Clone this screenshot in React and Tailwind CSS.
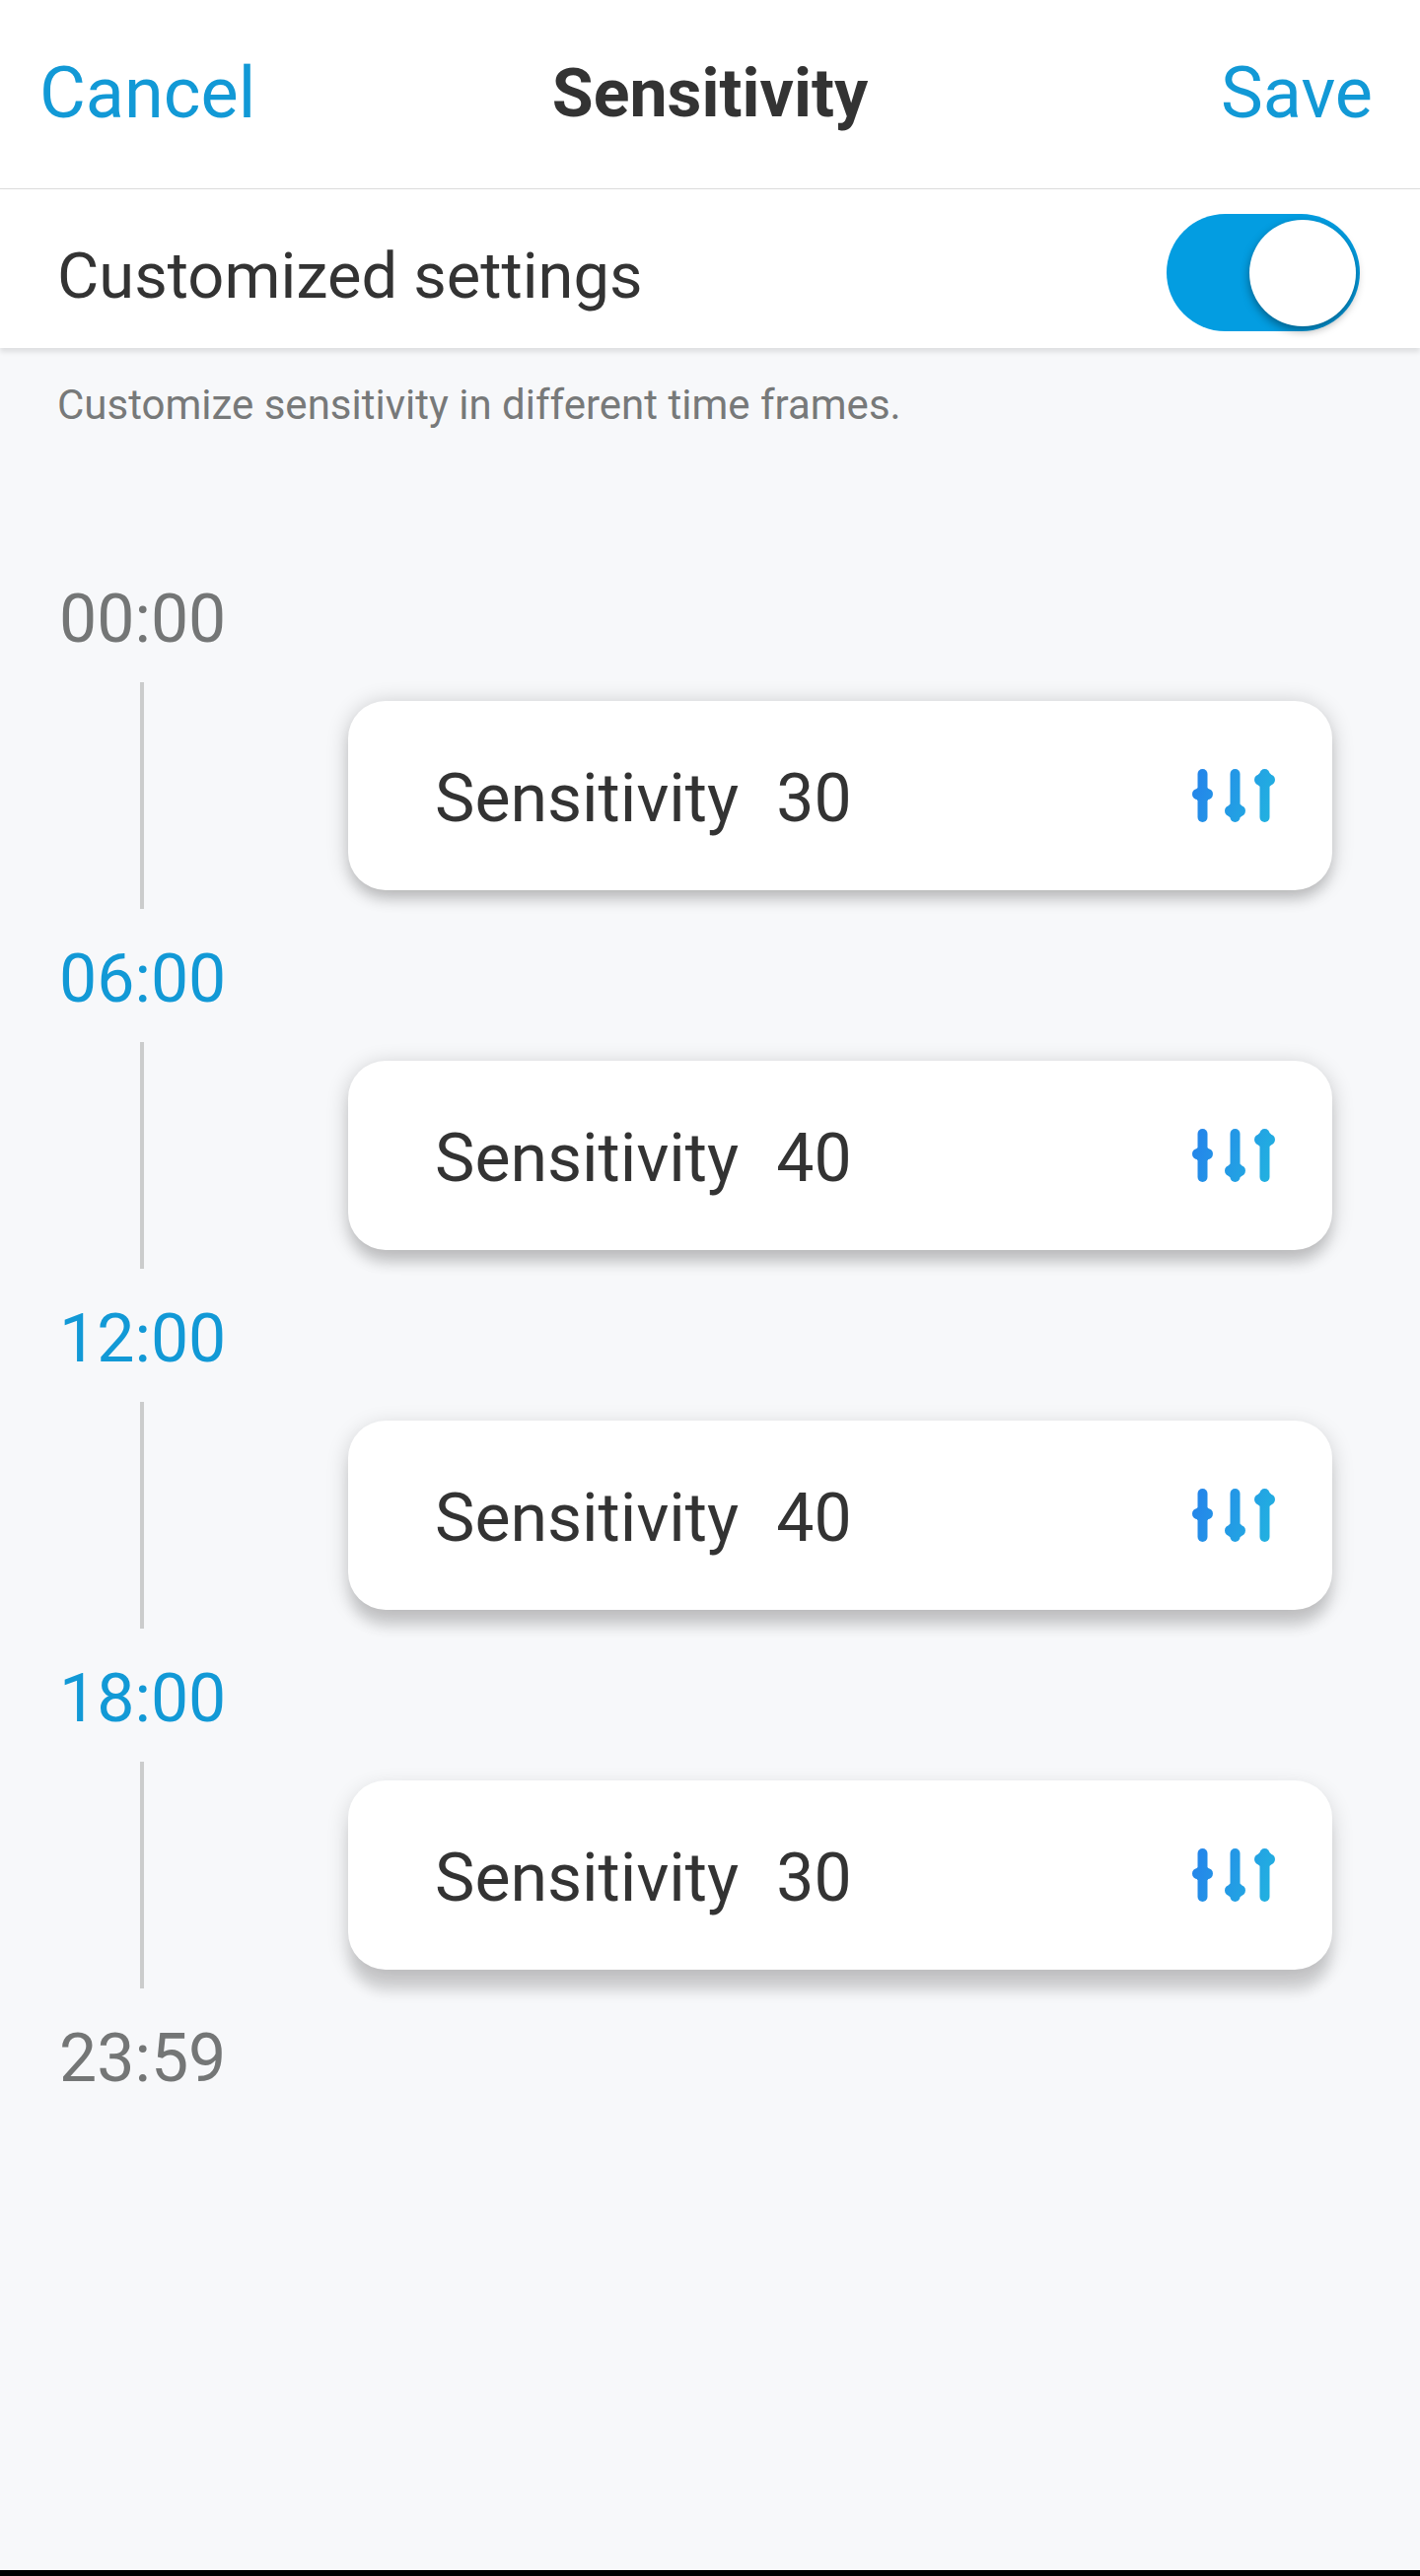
import React, { useState } from "react";

const frames = [
  {
    start: "00:00",
    value: 30,
    shadow: "shadow-[0_2px_22px_rgba(0,0,0,0.2),0_12px_14px_-3px_rgba(0,0,0,0.15)]",
  },
  {
    start: "06:00",
    value: 40,
    shadow: "shadow-[0_4px_22px_rgba(0,0,0,0.2),0_16px_14px_-3px_rgba(0,0,0,0.13)]",
  },
  {
    start: "12:00",
    value: 40,
    shadow: "shadow-[0_6px_22px_rgba(0,0,0,0.18),0_20px_14px_-3px_rgba(0,0,0,0.12)]",
  },
  {
    start: "18:00",
    value: 30,
    shadow: "shadow-[0_8px_22px_rgba(0,0,0,0.16),0_25px_14px_-3px_rgba(0,0,0,0.12)]",
  },
];

const SlidersIcon = () => (
  <svg className="w-[84px] h-[54px]" viewBox="0 0 84 54" fill="none" aria-hidden="true">
    <defs>
      <linearGradient id="sliders" gradientUnits="userSpaceOnUse" x1="0" y1="12" x2="84" y2="42">
        <stop offset="0" stopColor="#2484ea" />
        <stop offset="1" stopColor="#22b2e0" />
      </linearGradient>
    </defs>
    <g fill="url(#sliders)">
      <rect x="5.5" y="0" width="10" height="54" rx="5" />
      <rect x="0" y="20" width="21" height="11" rx="5.5" />
      <circle cx="10.5" cy="25.5" r="8" />
      <rect x="38.5" y="0" width="10" height="54" rx="5" />
      <rect x="33" y="37" width="21" height="11" rx="5.5" />
      <circle cx="43.5" cy="42.5" r="8.5" />
      <rect x="68.5" y="0" width="10" height="54" rx="5" />
      <rect x="63" y="5.5" width="21" height="11" rx="5.5" />
      <circle cx="73.5" cy="11" r="8.5" />
    </g>
  </svg>
);

const TimeFrame = ({ start, value, shadow, editable }) => (
  <li>
    {editable ? (
      <button type="button" className="block text-[68px] leading-[80px] text-[#1299d6]">
        {start}
      </button>
    ) : (
      <p className="text-[68px] leading-[80px] text-[#747676]">{start}</p>
    )}
    <div className="mt-6 mb-[31px] flex h-[230px] items-center">
      <div className="flex h-full w-[168px] shrink-0 justify-center">
        <div className="w-1 bg-[#cbcccc]" />
      </div>
      <button
        type="button"
        className={`ml-[125px] flex h-[192px] flex-1 items-center justify-between rounded-[38px] bg-white pr-[58px] pl-[88px] ${shadow}`}
      >
        <span className="flex gap-[38px] pt-[6px] text-[68px] leading-[80px] text-[#333333]">
          <span>Sensitivity</span>
          <span>{value}</span>
        </span>
        <SlidersIcon />
      </button>
    </div>
  </li>
);

const App = () => {
  const [customized, setCustomized] = useState(true);

  return (
    <div className="flex min-h-screen flex-col border-b-[6px] border-black bg-[#f7f8fa] font-['Roboto',sans-serif]">
      <header className="grid grid-cols-[1fr_auto_1fr] items-center border-b border-[#dcdcdc] bg-white px-10 pt-[45px] pb-[46px] leading-[100px]">
        <button type="button" className="justify-self-start text-[72px] text-[#1299d6]">
          Cancel
        </button>
        <h1 className="text-[68px] font-bold text-[#333333]">Sensitivity</h1>
        <button type="button" className="justify-self-end pr-2 text-[72px] text-[#1299d6]">
          Save
        </button>
      </header>

      <section className="flex items-center justify-between bg-white pt-[25px] pr-[61px] pb-[17px] pl-[58px] shadow-[0_4px_5px_rgba(0,0,0,0.1)]">
        <label htmlFor="customized" className="pt-[6px] text-[65px] leading-[80px] text-[#333333]">
          Customized settings
        </label>
        <input
          id="customized"
          type="checkbox"
          checked={customized}
          onChange={(e) => setCustomized(e.target.checked)}
          className="flex h-[119px] w-[196px] shrink-0 appearance-none items-center rounded-full bg-[#c8c8c8] px-1 before:block before:size-[108px] before:rounded-full before:bg-white before:shadow-[0_4px_10px_rgba(0,0,0,0.4)] checked:justify-end checked:bg-[#039de1]"
        />
      </section>

      <main className="flex-1 pb-10">
        <p className="pt-[32px] pl-[58px] text-[42px] leading-[52px] text-[#777979]">
          Customize sensitivity in different time frames.
        </p>
        <ol className="mt-[151px] pr-[89px] pl-[60px]">
          {frames.map((frame, i) => (
            <TimeFrame key={frame.start} {...frame} editable={i > 0} />
          ))}
          <li className="text-[68px] leading-[80px] text-[#747676]">23:59</li>
        </ol>
      </main>
    </div>
  );
};

export default App;
